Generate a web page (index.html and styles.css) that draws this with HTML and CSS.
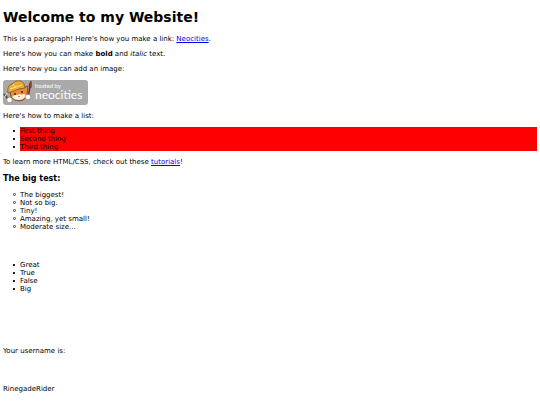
FILE: index.html
```
<!DOCTYPE html>
<html lang="en">
<head>
  <meta charset="UTF-8">
  <meta name="viewport" content="width=device-width, initial-scale=1.0">
  <title>The web site of RinegadeRider</title>
  <link rel="stylesheet" href="styles.css">
</head>
<body>
  <h1>Welcome to my Website!</h1>

  <p>This is a paragraph! Here's how you make a link: <a href="https://neocities.org">Neocities</a>.</p>

  <p>Here's how you can make <strong>bold</strong> and <em>italic</em> text.</p>

  <p>Here's how you can add an image:</p>
  <svg class="badge" viewBox="0 0 85 25" role="img" aria-label="Hosted by Neocities">
    <rect x="0" y="0" width="85" height="25" rx="3" fill="#a9a9a9"/>
    <!-- cat -->
    <path d="M7 11 L8 17 Q11 21 17 21 Q23 20 24 14 L25 6 L20 8 L10 10z" fill="#ee8b3a" stroke="#5b3217" stroke-width=".7"/>
    <path d="M9 17 Q12 14 15 15 Q17 13 18 15 Q21 13 23 15 Q22 19 16 20 Q11 20 9 17z" fill="#fff3df"/>
    <path d="M5 13 Q4 5 9 4 Q12 0 18 1 Q22 3 22 8 L16 9 L8 12z" fill="#e9ad35" stroke="#74501d" stroke-width=".7"/>
    <path d="M7 9 L19 5 M10 4 L13 8" fill="none" stroke="#ffe07a" stroke-width="1"/>
    <circle cx="12" cy="14" r="1" fill="#31211b"/>
    <circle cx="19" cy="12" r="1" fill="#31211b"/>
    <path d="M15 16 L17 16 L16 17z" fill="#70301e"/>
    <!-- hammer and brush -->
    <path d="M1 14 L6 20" stroke="#555" stroke-width="2"/>
    <path d="M1 18 L4 13" stroke="#ddd" stroke-width="1"/>
    <path d="M25 17 L27 7" stroke="#6d2d20" stroke-width="1.5"/>
    <path d="M26 7 Q26 3 28 1 Q29 4 28 8z" fill="#a83a2c" stroke="#632018" stroke-width=".5"/>
    <circle cx="6.5" cy="20" r="2.8" fill="#fff" stroke="#805b43" stroke-width=".5"/>
    <circle cx="25" cy="17" r="2.8" fill="#fff" stroke="#805b43" stroke-width=".5"/>
    <text class="badge-small" x="32" y="8">hosted by</text>
    <text class="badge-name" x="32" y="19">neocities</text>
  </svg>

  <p>Here's how to make a list:</p>

  <ul>
    <li class="red">First thing</li>
    <li class="red">Second thing</li>
    <li class="red">Third thing</li>
  </ul>

  <p>To learn more HTML/CSS, check out these <a href="https://neocities.org/tutorials">tutorials</a>!</p>

  <h3>The big test:</h3>
  <ul class="circles">
    <li>The biggest!</li>
    <li>Not so big.</li>
    <li>Tiny!</li>
    <li>Amazing, yet small!</li>
    <li>Moderate size...</li>
  </ul>
  <br>
  <br>
  <ul>
    <li>Great</li>
    <li>True</li>
    <li>False</li>
    <li>Big</li>
  </ul>
  <br>
  <br>
  <br>
  <br>
  <br>
  <p>Your username is:</p>
  <br>
  <br>
  <p>RinegadeRider</p>
</body>
</html>
```
FILE: styles.css
```
body {
  margin: 0;
  padding: 1px 3px;
  background: white;
  color: black;
  font-family: Verdana, "DejaVu Sans", sans-serif;
  font-size: 7px;
  line-height: 8px;
}

h1 {
  margin: 8px 0 9px;
  font-size: 14px;
  line-height: 17px;
}

h3 {
  margin: 8px 0;
  font-size: 8px;
  line-height: 9px;
}

p {
  margin: 7px 0;
}

a {
  color: #0000ee;
}

ul {
  margin: 7px 0;
  padding-left: 17px;
  list-style: none;
}

/* markers sit just left of the item text */
li::before {
  content: "";
  display: inline-block;
  box-sizing: border-box;
  width: 2px;
  height: 2px;
  margin: 0 5px 1px -7px;
  background: #222;
}

.circles li::before {
  width: 3px;
  height: 3px;
  margin: 0 4px 1px -7px;
  border: 1px solid #777;
  border-radius: 1px;
  background: white;
}

.red {
  background: red;
}

.badge {
  display: block;
  width: 85px;
  height: 25px;
}

.badge-small {
  fill: white;
  font: 6px Lato, sans-serif;
}

.badge-name {
  fill: white;
  font: 12px Lato, sans-serif;
}
```
